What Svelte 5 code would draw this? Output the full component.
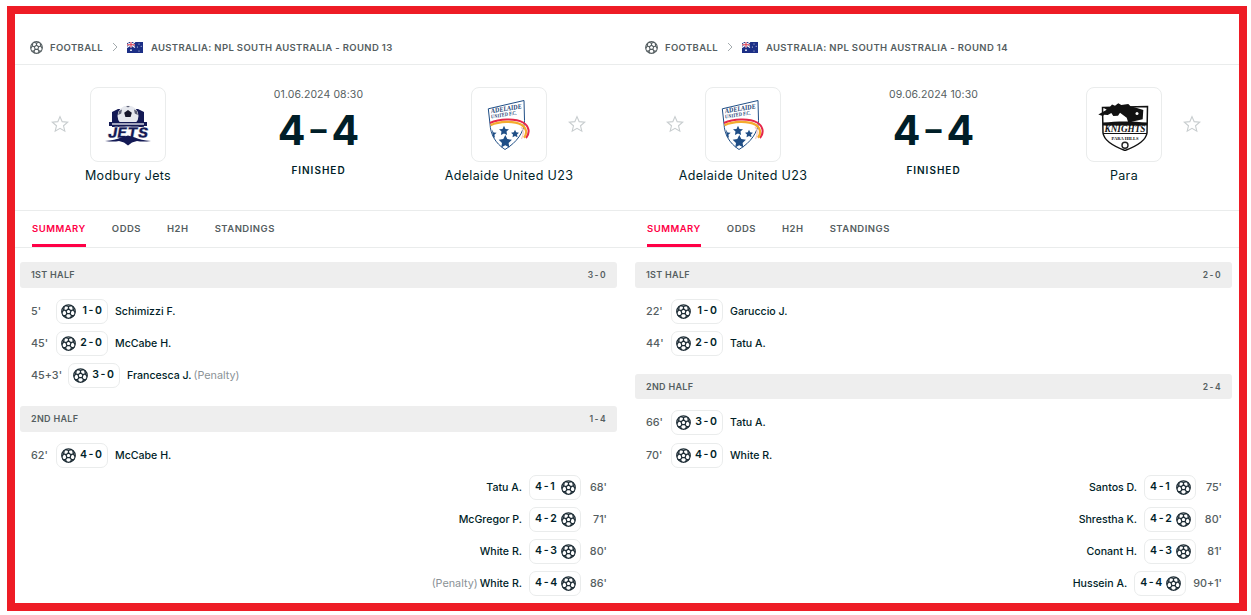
<script lang="ts">
  type Ev = { min: string; score: string; name: string; note?: string; away?: boolean };
  type Half = { label: string; score: string; events: Ev[] };
  type Match = {
    round: string; date: string; home: string; away: string;
    homeLogo: string; awayLogo: string; halves: Half[];
  };

  const matches: Match[] = [
    {
      round: "AUSTRALIA: NPL SOUTH AUSTRALIA - ROUND 13",
      date: "01.06.2024 08:30",
      home: "Modbury Jets",
      away: "Adelaide United U23",
      homeLogo: "jets",
      awayLogo: "adelaide",
      halves: [
        {
          label: "1ST HALF",
          score: "3 - 0",
          events: [
            { min: "5'", score: "1 - 0", name: "Schimizzi F." },
            { min: "45'", score: "2 - 0", name: "McCabe H." },
            { min: "45+3'", score: "3 - 0", name: "Francesca J.", note: "(Penalty)" },
          ],
        },
        {
          label: "2ND HALF",
          score: "1 - 4",
          events: [
            { min: "62'", score: "4 - 0", name: "McCabe H." },
            { min: "68'", score: "4 - 1", name: "Tatu A.", away: true },
            { min: "71'", score: "4 - 2", name: "McGregor P.", away: true },
            { min: "80'", score: "4 - 3", name: "White R.", away: true },
            { min: "86'", score: "4 - 4", name: "White R.", note: "(Penalty)", away: true },
          ],
        },
      ],
    },
    {
      round: "AUSTRALIA: NPL SOUTH AUSTRALIA - ROUND 14",
      date: "09.06.2024 10:30",
      home: "Adelaide United U23",
      away: "Para",
      homeLogo: "adelaide",
      awayLogo: "para",
      halves: [
        {
          label: "1ST HALF",
          score: "2 - 0",
          events: [
            { min: "22'", score: "1 - 0", name: "Garuccio J." },
            { min: "44'", score: "2 - 0", name: "Tatu A." },
          ],
        },
        {
          label: "2ND HALF",
          score: "2 - 4",
          events: [
            { min: "66'", score: "3 - 0", name: "Tatu A." },
            { min: "70'", score: "4 - 0", name: "White R." },
            { min: "75'", score: "4 - 1", name: "Santos D.", away: true },
            { min: "80'", score: "4 - 2", name: "Shrestha K.", away: true },
            { min: "81'", score: "4 - 3", name: "Conant H.", away: true },
            { min: "90+1'", score: "4 - 4", name: "Hussein A.", away: true },
          ],
        },
      ],
    },
  ];

  const tabs = ["SUMMARY", "ODDS", "H2H", "STANDINGS"];
</script>

{#snippet ball(cls: string)}
  <svg class={cls} viewBox="0 0 24 24" fill="none" stroke="currentColor" stroke-width="2" stroke-linejoin="round" stroke-linecap="round" aria-hidden="true">
    <circle cx="12" cy="12" r="10.800" />
    <path d="M12 7.800l4 2.900-1.500 4.700h-5L8 10.700z" />
    <path d="M12 7.800V4M16 10.700l3.800-1.300M14.500 15.400l2.300 3.300M9.500 15.400l-2.300 3.300M8 10.700L4.200 9.400" />
    <path d="M7.500 2.500L12 4l4.500-1.500M19.800 9.400l2.300 3.600M19.800 9.400L19 4.800M16.800 18.700l-1.600 3.200M16.800 18.700l4-.3M7.200 18.700l1.600 3.200M7.200 18.700l-4-.3M4.200 9.400l-2.300 3.600M4.200 9.400L5 4.800" />
  </svg>
{/snippet}

{#snippet star()}
  <svg class="star" viewBox="0 0 24 24" fill="none" stroke="#c8cdcf" stroke-width="1.500" stroke-linejoin="miter" aria-hidden="true">
    <path d="M12 2.200l2.900 6.700 7.300.7-5.500 4.800 1.700 7.200-6.400-3.800-6.400 3.800 1.700-7.200-5.500-4.800 7.300-.7z" />
  </svg>
{/snippet}

{#snippet flag()}
  <svg class="flag" viewBox="0 0 16 11" aria-hidden="true">
    <rect width="16" height="11" fill="#1c2f86" />
    <path d="M0 0l8 5.500M8 0L0 5.500" stroke="#fff" stroke-width="1.100" />
    <path d="M4 0v5.500M0 2.750h8" stroke="#fff" stroke-width="1.700" />
    <path d="M4 0v5.500M0 2.750h8" stroke="#d8283c" stroke-width=".9" />
    <circle cx="4" cy="8.200" r=".9" fill="#fff" />
    <circle cx="12" cy="2" r=".5" fill="#fff" />
    <circle cx="14.200" cy="4.300" r=".5" fill="#fff" />
    <circle cx="10.400" cy="5" r=".5" fill="#fff" />
    <circle cx="12" cy="9" r=".5" fill="#fff" />
  </svg>
{/snippet}

{#snippet logo(kind: string)}
  {#if kind === "jets"}
    <svg class="logo" viewBox="0 0 52 52" aria-hidden="true">
      <path d="M10 13l6-3 20 0 6 3v15H10z" fill="#141a55" />
      <circle cx="26" cy="17" r="10.500" fill="#e6e8ee" />
      <path d="M26 11l3.800 2.700-1.200 4.200h-5.200l-1.200-4.200z" fill="#15162a" />
      <path d="M17 12l3-1.500-.8 4-3 1.500zM35 12l-3-1.500.8 4 3 1.500zM24 7h4l-2 1.500z" fill="#5c5f74" />
      <path d="M7 23h38v4H7z" fill="#141a55" />
      <rect x="10" y="24.300" width="32" height="1.400" fill="#dfe1ea" />
      <text x="26" y="39" text-anchor="middle" textLength="40" lengthAdjust="spacingAndGlyphs" class="jets-text">JETS</text>
      <path d="M3 42c7-.6 12-1.500 16-3.500l7-2 7 2c4 2 9 2.900 16 3.500-6 .8-10 .8-14 0l-5 1.500-4 3-4-3-5-1.500c-4 .8-8 .8-14 0z" fill="#141a55" />
    </svg>
  {:else if kind === "adelaide"}
    <svg class="logo" viewBox="0 0 52 52" aria-hidden="true">
      <path d="M5.300 9.800L41 1.500l.5 20c-.2 12-8 22-19.500 29C12 44 7.500 35 7 25z" fill="#fff" stroke="#1f4e86" stroke-width="1" />
      <text x="23.500" y="11.800" text-anchor="middle" textLength="31" lengthAdjust="spacingAndGlyphs" transform="rotate(-9 23.500 11)" class="ade-text">ADELAIDE</text>
      <text x="21" y="17.500" text-anchor="middle" textLength="26" lengthAdjust="spacingAndGlyphs" transform="rotate(-9 21 17)" class="ade-small">UNITED F.C.</text>
      <path d="M7 24c9-4 25-5 33-.5 6 3.500 7.500 10 3 15.500" fill="none" stroke="#e5264a" stroke-width="2" />
      <path d="M7.500 26.200c9-4 23-4.500 31-.5 5 3 6 8.500 2.500 13" fill="none" stroke="#f4ab2e" stroke-width="2.200" />
      <path d="M38 28c3 3 3 7 .5 12" fill="none" stroke="#f7c9c2" stroke-width="1.200" />
      <path d="M21 26.800l1.500 3.100 3.500.4-2.500 2.300.6 3.400-3.100-1.600-3.100 1.600.6-3.400-2.500-2.300 3.500-.4z" fill="#1f4e86" />
      <path d="M32 30.800l1.200 2.500 2.800.4-2 1.900.5 2.700-2.500-1.300-2.500 1.300.5-2.700-2-1.900 2.800-.4z" fill="#1f4e86" />
      <path d="M22.300 36l2 4.100 4.600.6-3.300 3.200.8 4.500-4.100-2.200-4.100 2.200.8-4.500-3.300-3.200 4.600-.6z" fill="#1f4e86" />
      <path d="M9 30.500l1.600 3 3 .3-2.200 2 .6 2.900-2.200-1.200z" fill="#1f4e86" />
    </svg>
  {:else}
    <svg class="logo" viewBox="0 0 52 52" aria-hidden="true">
      <path d="M4.500 8.500L49.500 7.500 49 34c-1 7-10 13-22 17.500C15 47 6 41 5 34z" fill="#fff" stroke="#111" stroke-width="1.500" />
      <path d="M.3 15.500L8.700 10.800 6 9l5.300-.2L14 5.500l3 1.300 3.300-2.600 3 1.800 7-1 2.500 2.400 3.700.8 8.800 2.800-.6 9.300-7.700 1.700-6.700 1.700-1.600-5-6.700-5-2 3-4.700.3-2-3-3.500 2-3.500-.2-1.500 1.300z" fill="#111" />
      <circle cx="39" cy="14.500" r="1.500" fill="#fff" />
      <path d="M5 23.500c14-1.500 30-1.500 44 0v3H5z" fill="#111" />
      <text x="27" y="33" text-anchor="middle" textLength="41" lengthAdjust="spacingAndGlyphs" class="kn-text">KNIGHTS</text>
      <path d="M5 34h44v1H5z" fill="#111" />
      <text x="27" y="41" text-anchor="middle" textLength="27" lengthAdjust="spacingAndGlyphs" class="kn-small">PARA HILLS</text>
      <circle cx="27" cy="46.300" r="3" fill="#fff" stroke="#222" stroke-width="1.400" />
    </svg>
  {/if}
{/snippet}

<div class="frame">
  {#each matches as m}
    <section class="col">
      <nav class="crumbs">
        {@render ball("crumb-ball")}
        <span>FOOTBALL</span>
        <svg class="chev" viewBox="0 0 8 10" fill="none" stroke="#a4abae" stroke-width="1"><path d="M2 1l4 4-4 4" /></svg>
        {@render flag()}
        <span>{m.round}</span>
      </nav>

      <header class="head">
        <div class="team">
          <div class="top">
            <span class="star-l">{@render star()}</span>
            <div class="box">{@render logo(m.homeLogo)}</div>
          </div>
          <div class="tname">{m.home}</div>
        </div>
        <div class="mid">
          <div class="date">{m.date}</div>
          <div class="score"><span>4</span><span class="dash">–</span><span>4</span></div>
          <div class="status">FINISHED</div>
        </div>
        <div class="team">
          <div class="top">
            <span></span>
            <div class="box">{@render logo(m.awayLogo)}</div>
            <span class="star-r">{@render star()}</span>
          </div>
          <div class="tname">{m.away}</div>
        </div>
      </header>

      <div class="tabs">
        {#each tabs as t, i}
          <span class="tab" class:active={i === 0}>{t}</span>
        {/each}
      </div>

      <div class="content">
        {#each m.halves as h}
          <div class="bar"><span>{h.label}</span><span class="bar-score">{h.score}</span></div>
          <div class="rows">
            {#each h.events as e}
              {#if e.away}
                <div class="row right">
                  {#if e.note}<span class="note">{e.note}</span>{/if}
                  <span class="player">{e.name}</span>
                  <span class="chip">
                    <span class="chip-score">{e.score}</span>
                    {@render ball("chip-ball")}
                  </span>
                  <span class="minute">{e.min}</span>
                </div>
              {:else}
                <div class="row">
                  <span class="minute">{e.min}</span>
                  <span class="chip">
                    {@render ball("chip-ball")}
                    <span class="chip-score">{e.score}</span>
                  </span>
                  <span class="player">{e.name}</span>
                  {#if e.note}<span class="note">{e.note}</span>{/if}
                </div>
              {/if}
            {/each}
          </div>
        {/each}
      </div>
    </section>
  {/each}
</div>

<style>
  :global(body) {
    background: #fff;
    font-family: Inter, "Noto Sans", sans-serif;
    color: #001e28;
  }
  .frame {
    box-sizing: border-box;
    display: flex;
    width: 1240px;
    height: 605px;
    margin: 6px 0 0 7px;
    border: 8px solid #ee1c25;
    overflow: hidden;
    background: #fff;
  }
  .col {
    flex: 0 0 615px;
    min-width: 0;
  }
  .crumbs {
    box-sizing: border-box;
    display: flex;
    align-items: center;
    height: 51px;
    padding: 16px 0 0 15px;
    border-bottom: 1px solid #eaecec;
    font-size: 9.500px;
    font-weight: 600;
    letter-spacing: 0.35px;
    color: #555e61;
  }
  .crumb-ball {
    width: 13px;
    height: 13px;
    margin-right: 7px;
    color: #555e61;
  }
  .chev {
    width: 8px;
    height: 10px;
    margin: 0 8px;
  }
  .flag {
    width: 16px;
    height: 11px;
    margin-right: 8px;
  }
  .head {
    box-sizing: border-box;
    display: grid;
    grid-template-columns: 190px 191px 190px;
    height: 146px;
    padding: 22px 0 0 18px;
    border-bottom: 1px solid #eaecec;
  }
  .team {
    display: flex;
    flex-direction: column;
    align-items: center;
  }
  .top {
    display: grid;
    grid-template-columns: 57px 76px 57px;
    align-items: center;
  }
  .star-l {
    justify-self: end;
    margin-right: 22px;
    display: flex;
  }
  .star-r {
    justify-self: start;
    margin-left: 22px;
    display: flex;
  }
  .star {
    width: 18px;
    height: 18px;
    margin: -1px -1px 0;
  }
  .box {
    box-sizing: border-box;
    display: flex;
    align-items: center;
    justify-content: center;
    width: 76px;
    height: 75px;
    border: 1px solid #eaecec;
    border-radius: 8px;
  }
  .logo {
    width: 52px;
    height: 52px;
  }
  .jets-text {
    font: italic 900 15px Inter, sans-serif;
    fill: #141a55;
    stroke: #fff;
    stroke-width: 0.3px;
  }
  .ade-text {
    font: italic 700 7px "Liberation Serif", serif;
    fill: #123a70;
  }
  .ade-small {
    font: italic 700 5.500px "Liberation Serif", serif;
    fill: #123a70;
  }
  .kn-text {
    font: italic 700 9.500px "Liberation Serif", serif;
    fill: #111;
  }
  .kn-small {
    font: 700 5px "Liberation Serif", serif;
    fill: #111;
  }
  .tname {
    margin-top: 5px;
    font-size: 12.500px;
    line-height: 17px;
    letter-spacing: 0.35px;
    color: #001e28;
    white-space: nowrap;
  }
  .mid {
    display: flex;
    flex-direction: column;
    align-items: center;
  }
  .date {
    margin-top: 1px;
    font-size: 10.500px;
    line-height: 14px;
    color: #555e61;
    letter-spacing: 0.1px;
  }
  .score {
    display: flex;
    align-items: center;
    gap: 5px;
    height: 38px;
    margin-top: 9px;
    font-size: 41px;
    line-height: 38px;
    font-weight: 700;
    color: #001e28;
  }
  .dash {
    font-size: 32px;
  }
  .status {
    margin-top: 15px;
    font-size: 10px;
    line-height: 13px;
    font-weight: 600;
    letter-spacing: 1px;
    color: #001e28;
  }
  .tabs {
    box-sizing: border-box;
    display: flex;
    gap: 26px;
    height: 37px;
    padding-left: 17px;
    border-bottom: 1px solid #eaecec;
  }
  .tab {
    box-sizing: border-box;
    height: 36px;
    line-height: 35px;
    font-size: 9.500px;
    font-weight: 600;
    letter-spacing: 0.5px;
    color: #555e61;
  }
  .tab.active {
    color: #ff0046;
    border-bottom: 3px solid #ff0046;
  }
  .content {
    padding: 14px 13px 0 5px;
  }
  .bar {
    display: flex;
    justify-content: space-between;
    align-items: center;
    height: 25.600px;
    padding: 0 11px;
    background: #eeeeee;
    border-radius: 3px;
    font-size: 9px;
    font-weight: 600;
    letter-spacing: 0.3px;
    line-height: 24px;
    color: #555e61;
  }
  .bar-score {
    font-size: 8.500px;
    word-spacing: -1.200px;
  }
  .rows {
    padding: 7.400px 0 14.400px;
  }
  .row {
    display: flex;
    align-items: center;
    height: 32.200px;
    padding: 0 10px 0 11px;
    font-size: 10.800px;
  }
  .row.right {
    justify-content: flex-end;
  }
  .minute {
    min-width: 19px;
    margin-right: 6px;
    color: #555e61;
    font-weight: 500;
    white-space: nowrap;
  }
  .right .minute {
    margin: 0 0 0 7px;
    text-align: right;
  }
  .chip {
    box-sizing: border-box;
    display: flex;
    align-items: center;
    justify-content: space-between;
    height: 25px;
    width: 52px;
    padding: 0 4px;
    border: 1px solid #eaecec;
    border-radius: 7px;
    font-weight: 600;
    font-size: 10.500px;
  }
  .right .chip-score {
    margin-left: 1px;
  }
  .chip-ball {
    flex: none;
    width: 15px;
    height: 15px;
    color: #1e2d36;
  }
  .chip-score {
    white-space: nowrap;
    margin-top: -2px;
    margin-right: 1px;
    word-spacing: -1px;
  }
  .player {
    margin-left: 7px;
    font-weight: 500;
    font-size: 10.600px;
    white-space: nowrap;
  }
  .right .player {
    margin: 0 7px 0 0;
  }
  .note {
    margin-left: 2px;
    color: #8a9296;
    white-space: nowrap;
  }
  .right .note {
    margin: 0 2px 0 0;
  }
</style>
